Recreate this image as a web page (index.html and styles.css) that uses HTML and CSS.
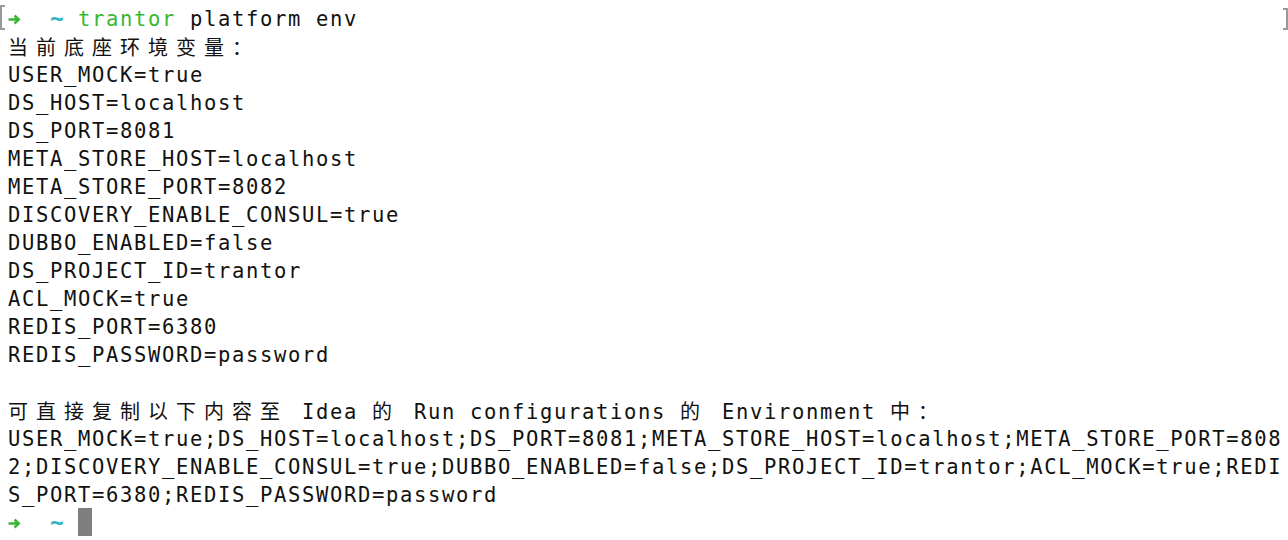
FILE: index.html
```html
<!DOCTYPE html>
<html lang="zh">
<head>
<meta charset="utf-8">
<title>terminal</title>
<link rel="stylesheet" href="styles.css">
</head>
<body>
<div class="term">
  <span class="mark mark-l"></span>
  <span class="mark mark-r"></span>
  <div class="ln"><span class="arrow"><svg width="13" height="11" viewBox="0 0 13 11"><path d="M0.5 5.5H10.5M6.5 1.5L10.8 5.5L6.5 9.5" fill="none" stroke="#37b832" stroke-width="2.4"/></svg></span>  <span class="cwd">~</span> <span class="cmd">trantor</span> platform env</div>
  <div class="ln"><span class="cjk">当前底座环境变量：</span></div>
  <div class="ln">USER_MOCK=true</div>
  <div class="ln">DS_HOST=localhost</div>
  <div class="ln">DS_PORT=8081</div>
  <div class="ln">META_STORE_HOST=localhost</div>
  <div class="ln">META_STORE_PORT=8082</div>
  <div class="ln">DISCOVERY_ENABLE_CONSUL=true</div>
  <div class="ln">DUBBO_ENABLED=false</div>
  <div class="ln">DS_PROJECT_ID=trantor</div>
  <div class="ln">ACL_MOCK=true</div>
  <div class="ln">REDIS_PORT=6380</div>
  <div class="ln">REDIS_PASSWORD=password</div>
  <div class="ln"> </div>
  <div class="ln"><span class="cjk">可直接复制以下内容至</span> Idea <span class="cjk">的</span> Run configurations <span class="cjk">的</span> Environment <span class="cjk">中：</span></div>
  <div class="ln">USER_MOCK=true;DS_HOST=localhost;DS_PORT=8081;META_STORE_HOST=localhost;META_STORE_PORT=808</div>
  <div class="ln">2;DISCOVERY_ENABLE_CONSUL=true;DUBBO_ENABLED=false;DS_PROJECT_ID=trantor;ACL_MOCK=true;REDI</div>
  <div class="ln">S_PORT=6380;REDIS_PASSWORD=password</div>
  <div class="ln"><span class="arrow"><svg width="13" height="11" viewBox="0 0 13 11"><path d="M0.5 5.5H10.5M6.5 1.5L10.8 5.5L6.5 9.5" fill="none" stroke="#37b832" stroke-width="2.4"/></svg></span>  <span class="cwd">~</span> <span class="cursor"> </span></div>
</div>
</body>
</html>
```

FILE: styles.css
```css
html, body {
  margin: 0;
  padding: 0;
  background: #ffffff;
}

.term {
  position: relative;
  width: 1288px;
  height: 540px;
  overflow: hidden;
  padding: 5px 0 0 8px;
  box-sizing: border-box;
  font-family: "DejaVu Sans Mono", "Noto Sans CJK SC", monospace;
  font-size: 20.5px;
  letter-spacing: 1.66px;
  color: #111111;
}

.ln {
  height: 28px;
  line-height: 28px;
  white-space: pre;
}

.cjk {
  font-family: "Noto Sans CJK SC", sans-serif;
  font-size: 20px;
  letter-spacing: 8px;
}

.arrow {
  display: inline-block;
  width: 14px;
  height: 28px;
  vertical-align: top;
  letter-spacing: 0;
}

.arrow svg {
  display: block;
  margin-top: 9px;
}

.cwd {
  color: #2fb5c6;
  font-weight: bold;
  font-size: 23px;
  line-height: 20px;
  letter-spacing: 0;
}

.cmd {
  color: #37b832;
}

.cursor {
  display: inline-block;
  width: 14px;
  height: 28px;
  margin-top: -1px;
  vertical-align: top;
  background: #7f7f7f;
  letter-spacing: 0;
}

.mark {
  position: absolute;
  width: 3px;
  border: 2px solid #9a9a9a;
  height: 21px;
  top: 5px;
}

.mark-l {
  left: 0;
  border-right: none;
}

.mark-r {
  right: 0;
  top: 8px;
  height: 18px;
  border-left: none;
}
```
